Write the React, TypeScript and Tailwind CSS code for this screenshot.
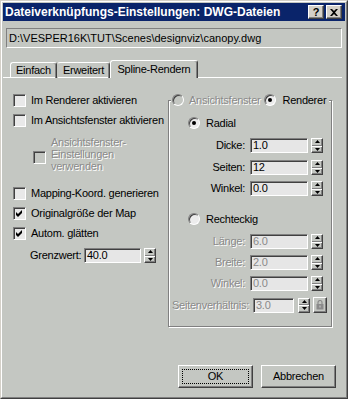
import React from 'react';

const raised = 'border border-t-white border-l-white border-r-[#404040] border-b-[#404040] shadow-[inset_-1px_-1px_0_#808080]';
const sunken = 'border border-t-[#808080] border-l-[#808080] border-r-white border-b-white shadow-[inset_1px_1px_0_#404040]';
const dim = 'text-[#8a8a8a] [text-shadow:1px_1px_0_#ffffff]';

const Check = ({ checked = false, disabled = false }: { checked?: boolean; disabled?: boolean }) => (
  <div className={`w-[13px] h-[13px] shrink-0 flex items-center justify-center ${sunken} ${disabled ? 'bg-[#c4c7c2]' : 'bg-[#e9e9e9]'}`}>
    {checked && (
      <svg width="7" height="7" viewBox="0 0 7 7">
        <path d="M0 2 L2 4 L6 0 L6 3 L2 7 L0 5 Z" fill="#000" />
      </svg>
    )}
  </div>
);

const Radio = ({ on = false, disabled = false }: { on?: boolean; disabled?: boolean }) => (
  <div className={`w-[12px] h-[12px] shrink-0 rounded-full flex items-center justify-center ${sunken} ${disabled ? 'bg-[#c4c7c2]' : 'bg-[#ececec]'}`}>
    {on && <div className="w-[4px] h-[4px] rounded-full bg-black" />}
  </div>
);

const Spin = () => (
  <div className={`w-[12px] h-[15px] shrink-0 flex flex-col ${raised}`}>
    <div className="flex-1 flex items-center justify-center border-b border-b-[#808080]">
      <svg width="5" height="3" viewBox="0 0 5 3"><path d="M2.5 0 L5 3 L0 3 Z" fill="#000" /></svg>
    </div>
    <div className="flex-1 flex items-center justify-center border-t border-t-white">
      <svg width="5" height="3" viewBox="0 0 5 3"><path d="M0 0 L5 0 L2.5 3 Z" fill="#000" /></svg>
    </div>
  </div>
);

const Field = ({ value, disabled = false, width = 'w-[58px]' }: { value: string; disabled?: boolean; width?: string }) => (
  <div className={`${width} h-[15px] shrink-0 flex items-center pl-[2px] leading-none bg-[#e6e6e6] ${sunken} ${disabled ? 'text-[#8a8a8a]' : 'text-black'}`}>
    {value}
  </div>
);

const NumRow = ({ label, value, disabled = false, className = '' }: { label: string; value: string; disabled?: boolean; className?: string }) => (
  <div className={`flex items-center ${className}`}>
    <div className={`w-[76px] text-right leading-none ${disabled ? dim : ''}`}>{label}</div>
    <div className="ml-[5px]"><Field value={value} disabled={disabled} /></div>
    <div className="ml-[3px]"><Spin /></div>
  </div>
);

const CheckRow = ({ label, checked = false, className = '' }: { label: string; checked?: boolean; className?: string }) => (
  <div className={`flex items-center h-[13px] gap-[5px] ${className}`}>
    <Check checked={checked} />
    <span className="leading-none whitespace-nowrap">{label}</span>
  </div>
);

const App = () => {
  return (
    <div className="w-[348px] h-[399px] bg-[#c4c7c2] border border-t-[#d4d0c8] border-l-[#d4d0c8] border-r-[#404040] border-b-[#404040] font-['Liberation_Sans',Arial,sans-serif] text-[11px] tracking-[-0.25px] text-black">
      <div className="h-full border border-t-white border-l-white border-r-[#808080] border-b-[#808080] p-px flex flex-col">
        {/* title bar */}
        <div className="h-[18px] shrink-0 bg-[#0a246a] flex items-center justify-between pl-[2px] pr-[3px]">
          <span className="text-white font-bold text-[12px] tracking-normal leading-none whitespace-nowrap">Dateiverknüpfungs-Einstellungen: DWG-Dateien</span>
          <div className="flex gap-[2px]">
            <div className={`w-[16px] h-[14px] bg-[#d4d0c8] flex items-center justify-center font-bold text-[11px] leading-none ${raised}`}>?</div>
            <div className={`w-[16px] h-[14px] bg-[#d4d0c8] flex items-center justify-center ${raised}`}>
              <svg width="8" height="7" viewBox="0 0 8 7">
                <path d="M0 0 H2 L4 2 L6 0 H8 L5 3.5 L8 7 H6 L4 5 L2 7 H0 L3 3.5 Z" fill="#000" />
              </svg>
            </div>
          </div>
        </div>

        {/* file path */}
        <div className="ml-[3px] mt-[7px] w-[336px] h-[20px] shrink-0 border border-t-[#808080] border-l-[#808080] border-r-white border-b-white flex items-center pl-[2px] leading-none whitespace-nowrap tracking-normal">
          D:\VESPER16K\TUT\Scenes\designviz\canopy.dwg
        </div>

        {/* tabs */}
        <div className="mt-[12px] h-[18px] shrink-0 flex items-end">
          <div className="w-[7px] h-px bg-white" />
          <div className="w-[47px] h-[16px] rounded-t-[3px] border border-b-0 border-t-white border-l-white border-r-[#404040] shadow-[inset_-1px_0_0_#808080,inset_0_-1px_0_#ffffff] flex items-center justify-center leading-none">Einfach</div>
          <div className="w-[53px] h-[16px] rounded-t-[3px] border border-b-0 border-t-white border-l-transparent border-r-[#404040] shadow-[inset_-1px_0_0_#808080,inset_0_-1px_0_#ffffff] flex items-center justify-center leading-none">Erweitert</div>
          <div className="w-[88px] h-[18px] rounded-t-[3px] border border-b-0 border-t-white border-l-white border-r-[#404040] shadow-[inset_-1px_0_0_#808080] flex items-center justify-center pb-[1px] leading-none">Spline-Rendern</div>
          <div className="w-[144px] h-px bg-white" />
        </div>

        {/* panel body */}
        <div className="flex">
          <div className="ml-[10px] w-[155px] flex flex-col">
            <CheckRow className="mt-[16px]" label="Im Renderer aktivieren" />
            <CheckRow className="mt-[7px]" label="Im Ansichtsfenster aktivieren" />
            <div className="mt-[9px] ml-[20px] flex items-start gap-[5px]">
              <div className="mt-[15px]"><Check disabled /></div>
              <div className={`leading-[12px] ${dim}`}>
                Ansichtsfenster-<br />Einstellungen<br />verwenden
              </div>
            </div>
            <CheckRow className="mt-[15px]" label="Mapping-Koord. generieren" />
            <CheckRow className="mt-[7px]" label="Originalgröße der Map" checked />
            <CheckRow className="mt-[7px]" label="Autom. glätten" checked />
            <div className="mt-[8px] ml-[17px] flex items-center">
              <div className="w-[54px] leading-none">Grenzwert:</div>
              <Field value="40.0" width="w-[57px]" />
              <div className="ml-[3px]"><Spin /></div>
            </div>
          </div>

          {/* group box */}
          <div className="mt-[22px] w-[164px] h-[227px] border border-[#808080] shadow-[inset_1px_1px_0_#ffffff,1px_1px_0_#ffffff] flex flex-col">
            <div className="-mt-[7px] ml-[2px] mr-[2px] bg-[#c4c7c2] flex items-center h-[12px] pl-px">
              <Radio disabled />
              <span className={`ml-[5px] leading-none ${dim}`}>Ansichtsfenster</span>
              <div className="ml-[4px]"><Radio on /></div>
              <span className="ml-[6px] leading-none">Renderer</span>
            </div>
            <div className="mt-[11px] ml-[19px] flex items-center h-[12px]">
              <Radio on />
              <span className="ml-[6px] leading-none">Radial</span>
            </div>
            <NumRow className="mt-[9px]" label="Dicke:" value="1.0" />
            <NumRow className="mt-[7px]" label="Seiten:" value="12" />
            <NumRow className="mt-[6px]" label="Winkel:" value="0.0" />
            <div className="mt-[17px] ml-[19px] flex items-center h-[12px]">
              <Radio />
              <span className="ml-[6px] leading-none">Rechteckig</span>
            </div>
            <NumRow className="mt-[9px]" label="Länge:" value="6.0" disabled />
            <NumRow className="mt-[6px]" label="Breite:" value="2.0" disabled />
            <NumRow className="mt-[6px]" label="Winkel:" value="0.0" disabled />
            <div className="mt-[6px] ml-[3px] flex items-center">
              <div className={`w-[81px] leading-none whitespace-nowrap ${dim}`}>Seitenverhältnis:</div>
              <Field value="3.0" disabled width="w-[41px]" />
              <div className="ml-[4px]"><Spin /></div>
              <div className={`ml-[3px] w-[14px] h-[16px] flex items-center justify-center ${raised}`}>
                <svg width="8" height="10" viewBox="0 0 8 10">
                  <path d="M2 4 V2.5 A2 2 0 0 1 6 2.5 V4" stroke="#8a8a8a" strokeWidth="1.2" fill="none" />
                  <rect x="0.5" y="4" width="7" height="5.5" fill="#8a8a8a" />
                  <rect x="3.5" y="5.5" width="1" height="2" fill="#d0d0d0" />
                </svg>
              </div>
            </div>
          </div>
        </div>

        {/* buttons */}
        <div className="mt-[38px] flex justify-end gap-[8px] pr-[9px]">
          <div className={`w-[75px] h-[23px] p-[3px] ${raised}`}>
            <div className="w-full h-full border border-dotted border-black flex items-center justify-center leading-none">OK</div>
          </div>
          <div className={`w-[75px] h-[23px] flex items-center justify-center leading-none ${raised}`}>Abbrechen</div>
        </div>
      </div>
    </div>
  );
};

export default App;
